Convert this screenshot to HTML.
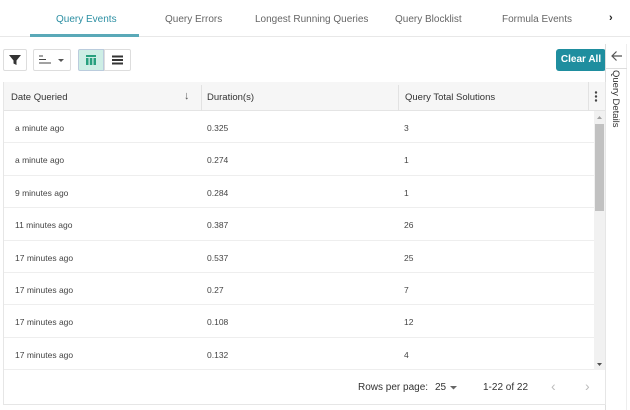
<!DOCTYPE html>
<html><head><style>
*{box-sizing:border-box;margin:0;padding:0}
body{width:630px;height:410px;background:#fff;font-family:"Liberation Sans",sans-serif;position:relative;overflow:hidden;color:#333}
.abs{position:absolute}
.tab{position:absolute;top:14px;font-size:10px;color:#666;white-space:nowrap}
.btn{position:absolute;top:49px;height:22px;border:1px solid #ddd;border-radius:2px;background:#fff}
.row{position:absolute;left:4px;width:590px;height:32.4px;border-bottom:1px solid #eee;font-size:8.5px;color:#444}
.row span{position:absolute;top:12px}
</style></head><body>
<div class="abs" style="left:0;top:36px;width:630px;height:1px;background:#e8e8e8"></div>
<div class="abs" style="left:30px;top:34px;width:109px;height:3px;background:#5aa9b8"></div>
<div class="tab" style="left:56px;color:#2c8fa3">Query Events</div>
<div class="tab" style="left:165px">Query Errors</div>
<div class="tab" style="left:255px">Longest Running Queries</div>
<div class="tab" style="left:395px">Query Blocklist</div>
<div class="tab" style="left:502px">Formula Events</div>
<div class="tab" style="left:609px;color:#222;font-weight:bold;font-size:11px;top:12px">›</div>

<div class="btn" style="left:3px;width:24px"><svg width="22" height="20" viewBox="0 0 22 20"><path d="M5 5h12l-4.5 5.5v4.5l-3-1.5v-3z" fill="#333"/></svg></div>
<div class="btn" style="left:33px;width:38px"><svg width="36" height="20" viewBox="0 0 36 20"><path d="M5 6h4M5 9.5h7M5 13h12" stroke="#444" stroke-width="1"/><path d="M24 9h6l-3 3z" fill="#555"/></svg></div>
<div class="btn" style="left:78px;width:26px;background:#cdeee5;border-color:#bcd;border-radius:2px 0 0 2px"><svg width="24" height="20" viewBox="0 0 24 20"><path d="M7 5h10v2H7zM7 8h2.5v7H7zM10.8 8h2.5v7h-2.5zM14.5 8H17v7h-2.5z" fill="#27a07e"/></svg></div>
<div class="btn" style="left:104px;width:27px;border-radius:0 2px 2px 0"><svg width="25" height="20" viewBox="0 0 25 20"><path d="M7 5.5h11v2H7zM7 9h11v2H7zM7 12.5h11v2H7z" fill="#333"/></svg></div>
<div class="abs" style="left:556px;top:49px;width:50px;height:22px;background:#1f8e9f;border-radius:3px;color:#fff;font-size:10px;font-weight:bold;text-align:center;line-height:22px">Clear All</div>

<div class="abs" style="left:605px;top:44px;width:22px;height:366px;border-left:1px solid #ddd;border-right:1px solid #eee"></div>
<div class="abs" style="left:605px;top:68px;width:22px;height:1px;background:#ddd"></div>
<svg class="abs" style="left:609px;top:48px" width="16" height="16" viewBox="0 0 16 16"><path d="M13 8H3M7.5 3.5L3 8l4.5 4.5" stroke="#555" stroke-width="1.2" fill="none"/></svg>
<div class="abs" style="left:609px;top:70px;width:14px;height:60px"><div style="transform:rotate(90deg);transform-origin:0 0;position:absolute;left:12px;top:0;font-size:9.5px;color:#333;white-space:nowrap">Query Details</div></div>

<div class="abs" style="left:3px;top:82px;width:603px;height:323px;border:1px solid #e6e6e6;border-top:none"></div>
<div class="abs" style="left:4px;top:82px;width:601px;height:29px;background:#f6f6f6;border-bottom:1px solid #e4e4e4;font-size:9.5px;color:#333">
<span class="abs" style="left:7px;top:10px">Date Queried</span>
<span class="abs" style="left:180px;top:8px;font-size:11px;color:#555">↓</span>
<div class="abs" style="left:197px;top:3px;width:1px;height:26px;background:#e2e2e2"></div>
<span class="abs" style="left:203px;top:10px">Duration(s)</span>
<div class="abs" style="left:394px;top:3px;width:1px;height:26px;background:#e2e2e2"></div>
<span class="abs" style="left:401px;top:10px">Query Total Solutions</span>
<div class="abs" style="left:584px;top:0;width:1px;height:29px;background:#e2e2e2"></div>
<svg class="abs" style="left:588px;top:8px" width="8" height="14"><circle cx="4" cy="2.5" r="1.2" fill="#444"/><circle cx="4" cy="6.5" r="1.2" fill="#444"/><circle cx="4" cy="10.5" r="1.2" fill="#444"/></svg>
</div>

<div class="row" style="top:111px"><span style="left:11px">a minute ago</span><span style="left:203px">0.325</span><span style="left:400px">3</span></div>
<div class="row" style="top:143.4px"><span style="left:11px">a minute ago</span><span style="left:203px">0.274</span><span style="left:400px">1</span></div>
<div class="row" style="top:175.8px"><span style="left:11px">9 minutes ago</span><span style="left:203px">0.284</span><span style="left:400px">1</span></div>
<div class="row" style="top:208.2px"><span style="left:11px">11 minutes ago</span><span style="left:203px">0.387</span><span style="left:400px">26</span></div>
<div class="row" style="top:240.6px"><span style="left:11px">17 minutes ago</span><span style="left:203px">0.537</span><span style="left:400px">25</span></div>
<div class="row" style="top:273px"><span style="left:11px">17 minutes ago</span><span style="left:203px">0.27</span><span style="left:400px">7</span></div>
<div class="row" style="top:305.4px"><span style="left:11px">17 minutes ago</span><span style="left:203px">0.108</span><span style="left:400px">12</span></div>
<div class="row" style="top:337.8px"><span style="left:11px">17 minutes ago</span><span style="left:203px">0.132</span><span style="left:400px">4</span></div>

<div class="abs" style="left:594px;top:111px;width:11px;height:259px;background:#f1f1f1"></div>
<div class="abs" style="left:595px;top:124px;width:9px;height:87px;background:#c1c1c1"></div>
<svg class="abs" style="left:595px;top:113px" width="9" height="8"><path d="M2 6h5L4.5 3z" fill="#a0a0a0"/></svg>
<svg class="abs" style="left:595px;top:361px" width="9" height="8"><path d="M2 2h5L4.5 5z" fill="#505050"/></svg>

<div class="abs" style="left:358px;top:382px;font-size:10px;color:#333">Rows per page:</div>
<div class="abs" style="left:435px;top:382px;font-size:10px;color:#333">25</div>
<svg class="abs" style="left:449px;top:385px" width="10" height="6"><path d="M1 1h7L4.5 4.5z" fill="#666"/></svg>
<div class="abs" style="left:483px;top:382px;font-size:10px;color:#333">1-22 of 22</div>
<div class="abs" style="left:551px;top:378px;font-size:14px;color:#bbb">‹</div>
<div class="abs" style="left:585px;top:378px;font-size:14px;color:#bbb">›</div>
</body></html>
